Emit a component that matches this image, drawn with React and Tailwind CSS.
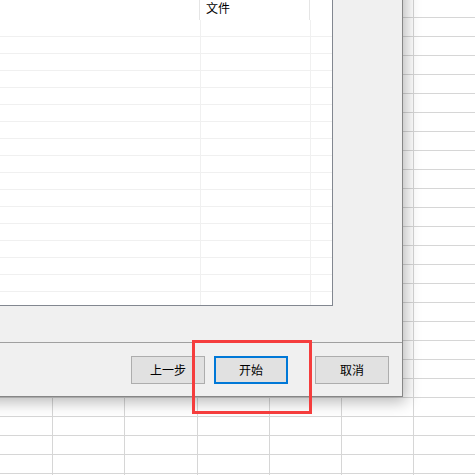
import React from "react";

const gridRows = Array.from({ length: 26 });
const colWidths = ["w-[72px]", "w-[72px]", "w-[73px]", "w-[72px]", "w-[72px]", "w-[72px]", "w-[72px]"];
const listRows = Array.from({ length: 18 });

function SheetGrid() {
  return (
    <div className="-mt-px -ml-[19px] flex flex-col">
      {gridRows.map((_, r) => (
        <div key={r} className="flex h-[19px] shrink-0">
          {colWidths.map((w, c) => (
            <div key={c} className={`${w} h-[19px] shrink-0 border-r border-b border-[#d6d6d6]`} />
          ))}
        </div>
      ))}
    </div>
  );
}

function Btn({ children, primary, className = "" }) {
  return (
    <button
      className={`w-[74px] h-[28px] flex items-center justify-center bg-[#e1e1e1] text-[12px] text-black ${
        primary ? "border-2 border-[#0078d7]" : "border border-[#adadad]"
      } ${className}`}
    >
      {children}
    </button>
  );
}

export default function App() {
  return (
    <div className="relative w-[475px] h-[475px] overflow-hidden bg-white font-['SimSun','Noto_Sans_CJK_SC',sans-serif]">
      {/* 背景表格 */}
      <SheetGrid />

      {/* 对话框 */}
      <div className="absolute left-[-20px] top-[-40px] w-[423px] h-[437px] flex flex-col bg-[#f0f0f0] border border-[#868686] shadow-[3px_5px_14px_rgba(0,0,0,0.28)]">
        <div className="pt-[36px] pr-[69px] pb-[36px]">
          <div className="h-[309px] border border-[#828790] bg-white overflow-hidden flex flex-col">
            {/* 表头 */}
            <div className="flex h-[22px] shrink-0">
              <div className="w-[218px] shrink-0 border-r border-[#e5e5e5]" />
              <div className="w-[110px] shrink-0 border-r border-[#e5e5e5] pl-[6px] pt-[3px] text-[12px] leading-[14px] text-black">
                文件
              </div>
              <div className="flex-1" />
            </div>
            {listRows.map((_, i) => (
              <div key={i} className="flex h-[17px] shrink-0 border-b border-[#f0f0f0]">
                <div className="w-[219px] shrink-0 border-r border-[#f0f0f0]" />
                <div className="w-[110px] shrink-0 border-r border-[#f0f0f0]" />
                <div className="flex-1" />
              </div>
            ))}
          </div>
        </div>
        <div className="h-px bg-[#a0a0a0]" />
        <div className="flex-1 flex justify-end items-start pt-[13px] pr-[13px]">
          <Btn>上一步</Btn>
          <Btn primary className="ml-[9px]">开始</Btn>
          <Btn className="ml-[27px]">取消</Btn>
        </div>
      </div>

      {/* 红色标注框 */}
      <div className="absolute left-[192px] top-[340px] w-[120px] h-[74px] border-[3px] border-[#f53d3d]" />
    </div>
  );
}
